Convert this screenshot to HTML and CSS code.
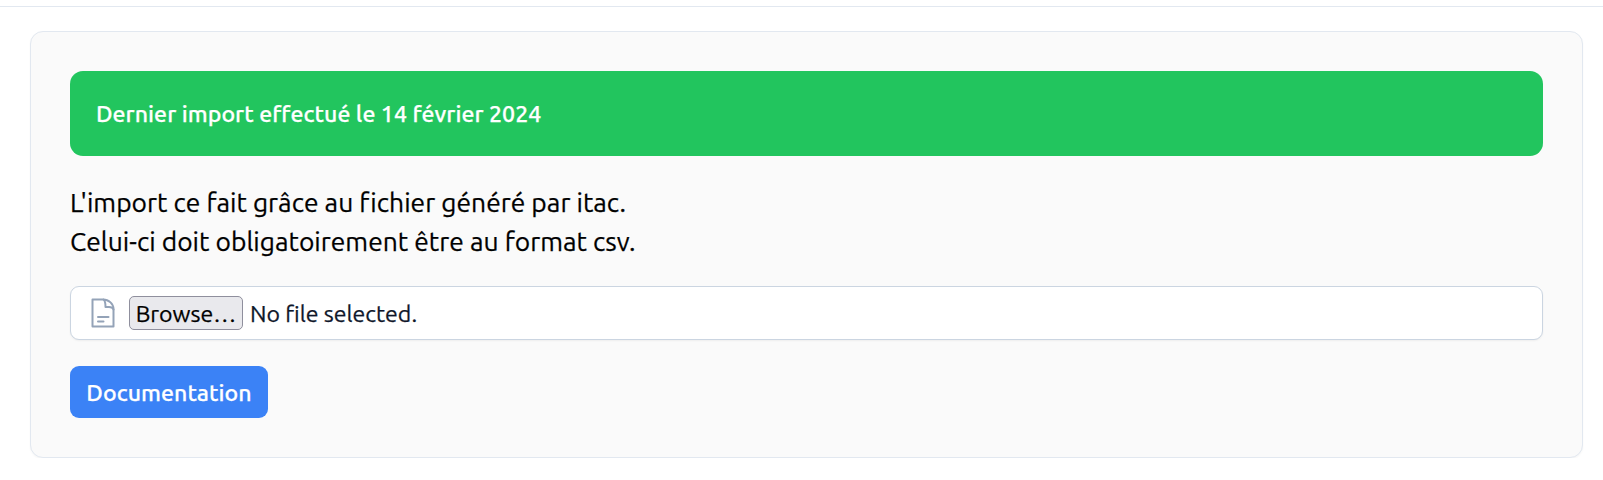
FILE: index.html
```html
<!DOCTYPE html>
<html lang="fr">
<head>
<meta charset="utf-8">
<title>Import</title>
<link rel="stylesheet" href="styles.css">
</head>
<body>
<header class="topbar"></header>
<main class="card">
  <div class="alert">Dernier import effectué le 14 février 2024</div>
  <p class="intro">L'import ce fait grâce au fichier généré par itac.<br>Celui-ci doit obligatoirement être au format csv.</p>
  <div class="file-field">
    <svg class="file-icon" viewBox="0 0 24 30" fill="none" stroke="#94a3b8" stroke-width="2" stroke-linejoin="round" stroke-linecap="round">
      <path d="M1.500 1.500H12C18 1.500 22.500 6 22.500 11V28.500H1.500Z"/>
      <path d="M12.500 1.500C14.500 3 14.500 6 14.500 9H18C20.500 9 22 10 22.500 11.500"/>
      <path d="M7 19H17.500M7 23.500H12.500"/>
    </svg>
    <button class="browse" type="button">Browse…</button>
    <span class="file-name">No file selected.</span>
  </div>
  <a class="doc-button">Documentation</a>
</main>
</body>
</html>
```
FILE: styles.css
```css
* { box-sizing: border-box; }
body {
  margin: 0;
  background: #fff;
  color: #000;
  font-family: Ubuntu, "Noto Sans", sans-serif;
  -webkit-text-stroke: 0.25px currentColor;
}
.topbar { height: 7px; border-bottom: 1px solid #e2e8f0; }
.card {
  display: flex;
  flex-direction: column;
  align-items: flex-start;
  height: 427px;
  margin: 24px 20px 0 30px;
  padding: 39px;
  border: 1px solid #e2e8f0;
  border-radius: 13px;
  background: #fafafa;
  box-shadow: 0 1px 2px rgba(0, 0, 0, .04);
}
.alert {
  display: flex;
  align-items: center;
  align-self: stretch;
  height: 85px;
  padding: 0 26px 2px;
  border-radius: 13px;
  background: #22c55e;
  color: #fff;
  font-size: 23.1px;
  font-weight: 500;
  letter-spacing: .05px;
  white-space: nowrap;
}
.intro {
  margin: 27px 0 0;
  font-size: 26.4px;
  letter-spacing: .02px;
  line-height: 39px;
  white-space: nowrap;
}
.file-field {
  display: flex;
  align-items: center;
  align-self: stretch;
  height: 54px;
  margin-top: 25px;
  padding-left: 20px;
  border: 1px solid #cbd5e1;
  border-radius: 9px;
  background: #fff;
  color: #0f172a;
  font-size: 23.1px;
  box-shadow: 0 1px 2px rgba(0, 0, 0, .05);
}
.file-icon { width: 24px; height: 30px; margin-right: 14px; }
.browse {
  width: 114px;
  height: 34px;
  margin: 0 7px 0 0;
  padding: 0;
  border: 1px solid #8f8f9d;
  border-radius: 5px;
  background: #e9e9ed;
  color: #000;
  font: inherit;
  line-height: 32px;
}
.doc-button {
  display: flex;
  align-items: center;
  justify-content: center;
  width: 198px;
  height: 52px;
  margin-top: 26px;
  border-radius: 9px;
  background: #3b82f6;
  color: #fff;
  font-size: 23.1px;
  font-weight: 500;
  letter-spacing: .05px;
}
```
